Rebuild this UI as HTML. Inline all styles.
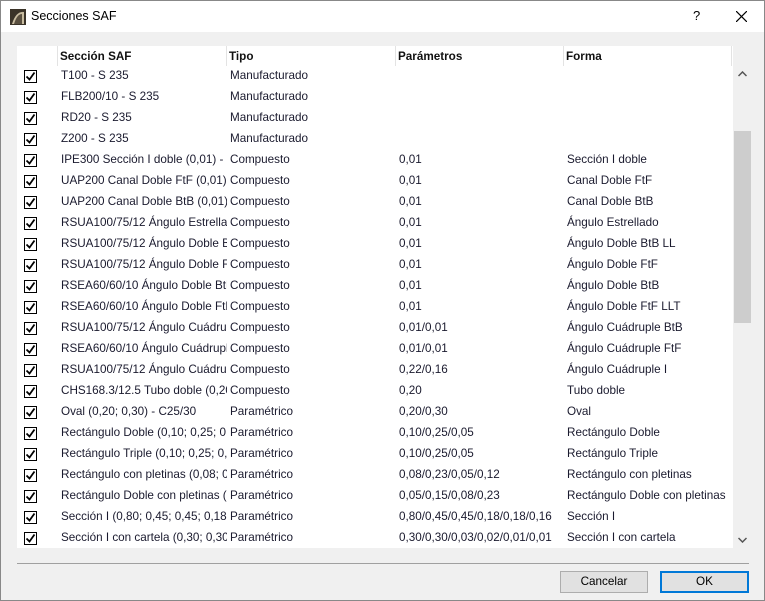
<html><head><style>
body{margin:0;width:765px;height:601px;overflow:hidden;font-family:"Liberation Sans",sans-serif;font-size:11.7px;color:#000;}
.win{position:absolute;left:0;top:0;width:763px;height:599px;border:1px solid #888;background:#f0f0f0;}
.title{position:absolute;left:0;top:0;width:763px;height:31px;background:#fff;}
.title .t{position:absolute;left:30px;top:8px;font-size:12.5px;}
.list{position:absolute;left:16px;top:45px;width:716px;height:502px;background:#fff;overflow:hidden;}
.hdr{position:absolute;top:0;height:21px;line-height:21px;font-weight:bold;color:#111;}
.sep{position:absolute;top:0;width:1px;height:20px;background:#e3e3e3;}
.row{position:absolute;left:0;height:21px;line-height:20px;width:716px;color:#1a1a2e;}
.row span{position:absolute;white-space:nowrap;overflow:hidden;}
.cb{position:absolute;left:7px;top:4px;width:11px;height:11px;border:1px solid #000;}
.cb svg{position:absolute;left:0;top:0}
.sb{position:absolute;left:733px;top:65px;width:17px;height:482px;background:#f0f0f0;}
.btn{position:absolute;top:570px;width:86px;height:20px;border:1px solid #adadad;background:#e1e1e1;text-align:center;line-height:20px;}
</style></head><body>
<div class="win">
<div class="title">
<svg style="position:absolute;left:9px;top:8px" width="16" height="16"><rect width="16" height="16" fill="#3a3328"/><path d="M2 15 Q6 2 14 3 L14 15 Z" fill="#c8bca0"/><path d="M4 15 Q7 5 12 5 L12 15Z" fill="#5a5040"/></svg>
<div class="t">Secciones SAF</div>
<div style="position:absolute;left:692px;top:7px;font-size:13px">?</div>
<svg style="position:absolute;left:735px;top:10px" width="11" height="11"><path d="M0 0L11 11M11 0L0 11" stroke="#000" stroke-width="1.2"/></svg>
</div>
<div class="list" id="l">
<div class="hdr" style="left:43px">Sección SAF</div>
<div class="hdr" style="left:212px">Tipo</div>
<div class="hdr" style="left:381px">Parámetros</div>
<div class="hdr" style="left:549px">Forma</div>
<div class="sep" style="left:40px"></div><div class="sep" style="left:209px"></div><div class="sep" style="left:378px"></div><div class="sep" style="left:546px"></div><div class="sep" style="left:714px"></div>
</div>
<div class="sb">
<svg style="position:absolute;left:4px;top:5px" width="9" height="6"><path d="M0.5 5L4.5 1L8.5 5" stroke="#555" stroke-width="1.5" fill="none"/></svg>
<div style="position:absolute;left:0;top:65px;width:17px;height:192px;background:#cdcdcd"></div>
<svg style="position:absolute;left:4px;top:471px" width="9" height="6"><path d="M0.5 1L4.5 5L8.5 1" stroke="#555" stroke-width="1.5" fill="none"/></svg>
</div>
<div style="position:absolute;left:16px;top:562px;width:732px;height:1px;background:#a0a0a0"></div>
<div class="btn" style="left:559px">Cancelar</div>
<div class="btn" style="left:659px;border:2px solid #0078d7;width:85px;height:18px;line-height:18px">OK</div>
</div>
<script>
var d=[["T100 - S 235","Manufacturado","",""],["FLB200/10 - S 235","Manufacturado","",""],["RD20 - S 235","Manufacturado","",""],["Z200 - S 235","Manufacturado","",""],
["IPE300 Sección I doble (0,01) - S 235","Compuesto","0,01","Sección I doble"],["UAP200 Canal Doble FtF (0,01) - S 235","Compuesto","0,01","Canal Doble FtF"],["UAP200 Canal Doble BtB (0,01) - S 235","Compuesto","0,01","Canal Doble BtB"],
["RSUA100/75/12 Ángulo Estrellado","Compuesto","0,01","Ángulo Estrellado"],["RSUA100/75/12 Ángulo Doble BtB","Compuesto","0,01","Ángulo Doble BtB LL"],["RSUA100/75/12 Ángulo Doble FtF","Compuesto","0,01","Ángulo Doble FtF"],
["RSEA60/60/10 Ángulo Doble BtB","Compuesto","0,01","Ángulo Doble BtB"],["RSEA60/60/10 Ángulo Doble FtF","Compuesto","0,01","Ángulo Doble FtF LLT"],["RSUA100/75/12 Ángulo Cuádruple","Compuesto","0,01/0,01","Ángulo Cuádruple BtB"],
["RSEA60/60/10 Ángulo Cuádruple","Compuesto","0,01/0,01","Ángulo Cuádruple FtF"],["RSUA100/75/12 Ángulo Cuádruple","Compuesto","0,22/0,16","Ángulo Cuádruple I"],["CHS168.3/12.5 Tubo doble (0,20)","Compuesto","0,20","Tubo doble"],
["Oval (0,20; 0,30) - C25/30","Paramétrico","0,20/0,30","Oval"],["Rectángulo Doble (0,10; 0,25; 0,05)","Paramétrico","0,10/0,25/0,05","Rectángulo Doble"],["Rectángulo Triple (0,10; 0,25; 0,05)","Paramétrico","0,10/0,25/0,05","Rectángulo Triple"],
["Rectángulo con pletinas (0,08; 0,23)","Paramétrico","0,08/0,23/0,05/0,12","Rectángulo con pletinas"],["Rectángulo Doble con pletinas (0,05)","Paramétrico","0,05/0,15/0,08/0,23","Rectángulo Doble con pletinas"],
["Sección I (0,80; 0,45; 0,45; 0,18; 0,18)","Paramétrico","0,80/0,45/0,45/0,18/0,18/0,16","Sección I"],["Sección I con cartela (0,30; 0,30; 0,03)","Paramétrico","0,30/0,30/0,03/0,02/0,01/0,01","Sección I con cartela"]];
var h="";d.forEach(function(r,i){h+='<div class="row" style="top:'+(20+i*21)+'px"><div class="cb"><svg width="11" height="11"><path d="M1.5 5.5L4.5 8.5L9.5 1.5" stroke="#000" stroke-width="1.8" fill="none"/></svg></div><span style="left:44px;width:166px">'+r[0]+'</span><span style="left:213px;width:165px">'+r[1]+'</span><span style="left:382px;width:164px">'+r[2]+'</span><span style="left:550px;width:166px">'+r[3]+'</span></div>';});
document.getElementById("l").insertAdjacentHTML("beforeend",h);
</script>
</body></html>
